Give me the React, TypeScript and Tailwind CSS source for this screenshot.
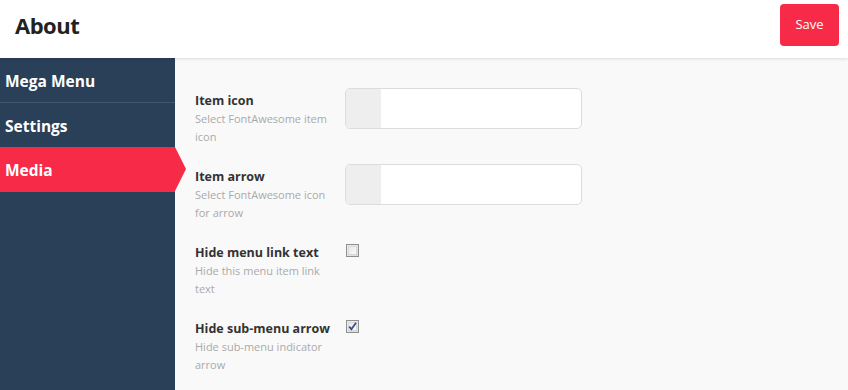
import React from "react";

const font = { fontFamily: '"Open Sans", "Noto Sans", sans-serif' };

function Row({
  title,
  desc,
  children,
}: {
  title: string;
  desc: string;
  children: React.ReactNode;
}) {
  return (
    <div className="flex items-start">
      <div className="w-[150px] shrink-0 pt-[4px]">
        <div className="text-[12.5px] font-bold leading-[18px] text-[#333]">{title}</div>
        <div className="w-[140px] text-[11px] leading-[18px] text-[#aaa]">{desc}</div>
      </div>
      {children}
    </div>
  );
}

function IconInput() {
  return (
    <div className="flex h-[41px] w-[237px] overflow-hidden rounded-[5px] border border-[#dcdcdc] bg-white">
      <div className="w-[35px] bg-[#eeeeee]" />
      <div className="flex-1" />
    </div>
  );
}

function Checkbox({ checked }: { checked?: boolean }) {
  return (
    <div className="ml-px mt-[4px] flex h-[13px] w-[13px] items-center justify-center border border-[#8e8f8f] bg-gradient-to-br from-[#f0f0f0] to-[#dcdcdc]">
      <div className="flex h-[9px] w-[9px] items-center justify-center border border-[#d8d8d8] bg-gradient-to-br from-[#e8e8e8] to-[#fbfbfb]">
        {checked && (
          <svg width="9" height="9" viewBox="0 0 9 9" className="overflow-visible">
            <path d="M1.2 4.6 L3.4 7.2 L8 0.8" fill="none" stroke="#3a4f8a" strokeWidth="1.8" />
          </svg>
        )}
      </div>
    </div>
  );
}

export default function App() {
  return (
    <div className="flex h-[390px] w-[848px] flex-col overflow-hidden bg-[#f9f9f9]" style={font}>
      <header className="relative z-10 flex h-[58px] shrink-0 items-start justify-between bg-white pl-[15px] pr-[9px] pt-[4px] shadow-[0_1px_3px_rgba(0,0,0,0.12)]">
        <h1 className="flex h-[42px] items-center text-[22px] font-bold tracking-[-0.5px] text-[#222]">About</h1>
        <button className="h-[42px] w-[59px] rounded-[4px] bg-[#f72b47] text-[13px] text-white">Save</button>
      </header>
      <div className="flex flex-1">
        <nav className="w-[175px] shrink-0 bg-[#2a3f58]">
          <div className="flex h-[44px] items-center px-[5px] pt-[3px] text-[15.5px] font-bold text-white">Mega Menu</div>
          <div className="h-px bg-[#41566f]" />
          <div className="flex h-[44px] items-center px-[5px] pt-[3px] text-[15.5px] font-bold text-white">Settings</div>
          <div className="relative flex h-[45px] items-center bg-[#f72b47] px-[5px] pt-[3px] text-[15.5px] font-bold text-white">
            Media
            <div className="absolute left-full top-0 h-0 w-0 border-y-[22.5px] border-l-[11px] border-y-transparent border-l-[#f72b47]" />
          </div>
        </nav>
        <main className="flex flex-1 flex-col gap-[18px] pl-[20px] pt-[30px]">
          <Row title="Item icon" desc="Select FontAwesome item icon">
            <IconInput />
          </Row>
          <Row title="Item arrow" desc="Select FontAwesome icon for arrow">
            <IconInput />
          </Row>
          <Row title="Hide menu link text" desc="Hide this menu item link text">
            <Checkbox />
          </Row>
          <Row title="Hide sub-menu arrow" desc="Hide sub-menu indicator arrow">
            <Checkbox checked />
          </Row>
        </main>
      </div>
    </div>
  );
}
